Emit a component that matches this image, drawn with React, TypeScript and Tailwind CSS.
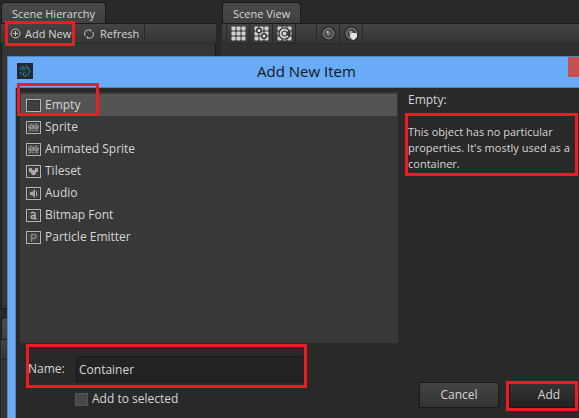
import { useState, type ReactNode } from "react";

const INVADER = [
  "..#.....#..",
  "...#...#...",
  "#.#######.#",
  "###.###.###",
  "###########",
  ".#########.",
  "..#.....#..",
  ".##.#.#.##.",
];

function Frame({ children }: { children?: ReactNode }) {
  return (
    <svg width="15" height="13" viewBox="0 0 15 13" aria-hidden="true" className="shrink-0">
      <rect x="0.5" y="0.5" width="14" height="12" fill="#404040" stroke="#b4b4b4" />
      <rect x="1.5" y="1.5" width="12" height="10" fill="none" stroke="#2e2e2e" strokeOpacity="0.7" />
      {children}
    </svg>
  );
}

function Invader() {
  return (
    <g>
      <rect x="2" y="2" width="11" height="9" fill="#505050" />
      {INVADER.flatMap((row, y) =>
        row.split("").map((c, x) => (c === "#" ? <rect key={x + "-" + y} x={x + 2} y={y + 2} width="1" height="1" fill="#868686" /> : null)),
      )}
    </g>
  );
}

const ITEMS: { name: string; art?: ReactNode }[] = [
  { name: "Empty" },
  { name: "Sprite", art: <Invader /> },
  { name: "Animated Sprite", art: <Invader /> },
  { name: "Tileset", art: <path d="M3 3h3v2h3V3h3v4h-2v2H9v1H6V9H5V7H3z" fill="#a8a8a8" /> },
  { name: "Audio", art: <path d="M4 5h2l3-3v9L6 8H4z M10 4h1v5h-1z" fill="#a4a4a4" /> },
  { name: "Bitmap Font", art: <path d="M5 4.500Q7.500 2 9 4.500V10M9 6.500H7Q5 6.800 5 8T7 9.500Q8.500 9.500 9 8M9 10h1.500" fill="none" stroke="#b0b0b0" strokeWidth="1.500" /> },
  { name: "Particle Emitter", art: <path d="M5.500 11V3.500H8Q10 3.500 10 5.300T8 7.500H5.500" fill="none" stroke="#858585" strokeWidth="1.500" /> },
];

const DOTS = [0, 5, 10];

function GridIcon({ kind }: { kind: "plain" | "snap" | "center" }) {
  return (
    <svg width="15" height="15" viewBox="0 0 15 15" aria-hidden="true">
      {DOTS.flatMap((y) => DOTS.map((x) => <rect key={x + "-" + y} x={x + 0.5} y={y + 0.5} width="4" height="4" rx="0.8" fill="#d0d0d0" />))}
      {kind === "snap" && (
        <g fill="#dcdcdc" stroke="#363636" strokeWidth="1.500">
          <circle cx="5" cy="4.500" r="2.300" />
          <circle cx="10" cy="10" r="2.300" />
        </g>
      )}
      {kind === "center" && (
        <g fill="none">
          <circle cx="7.500" cy="7.500" r="4.200" stroke="#383838" strokeWidth="4" />
          <path d="M10.800 5.300A4 4 0 1 0 10.800 9.700" stroke="#d0d0d0" strokeWidth="1.800" />
        </g>
      )}
    </svg>
  );
}

function LensIcon({ bulb }: { bulb?: boolean }) {
  return (
    <svg width="15" height="15" viewBox="0 0 15 15" aria-hidden="true">
      <circle cx="7.500" cy="7.500" r="7" fill="#1a1a1a" />
      <circle cx="7.500" cy="7.500" r="5.500" fill="#555" stroke="#929292" />
      <circle cx="7.500" cy="7.500" r="3" fill="#707070" stroke="#333" />
      <circle cx="6.500" cy="6" r="1.200" fill="#b5b5b5" />
      {bulb && <path d="M6 9a2 2 0 0 1 2-2h3a2 2 0 0 1 2 2v2l-3 3H9l-3-3z" fill="#e2e2e2" />}
    </svg>
  );
}

function Highlight({ className }: { className: string }) {
  return <span aria-hidden="true" className={"pointer-events-none absolute z-10 border-3 border-[#ed1c24] " + className} />;
}

const BAR = "flex h-[21px] items-stretch border-y border-t-[#1a1a1a] border-b-[#292929] bg-linear-to-b from-[#444] to-[#343434]";
const TAB = "flex h-[22px] -mb-px items-center self-start rounded-t border border-b-0 border-[#191919] bg-linear-to-b from-[#4a4a4a] to-[#404040] px-2.5";
const TOOL = "flex w-[23px] items-center justify-center border-l border-[#292929]";
const BUTTON = "h-[26px] w-20 border border-[#191919] bg-linear-to-b";

export default function App() {
  const [selected, setSelected] = useState("Empty");
  const [name, setName] = useState("Container");

  return (
    <div className="relative flex h-screen min-h-[418px] gap-1.5 overflow-hidden bg-[#282828] pt-0.5 font-['Open_Sans','Noto_Sans',sans-serif] text-[12px] leading-4 text-[#d6d6d6]">
      <div className="flex w-[216px] shrink-0 flex-col gap-2 pl-px text-[11px]">
        <section className="flex h-[307px] shrink-0 flex-col">
          <h2 className={TAB}>Scene Hierarchy</h2>
          <div className={BAR}>
            <button className="relative flex w-[74px] items-center gap-1 pl-[9px]">
              <svg width="11" height="11" viewBox="0 0 11 11" fill="none" stroke="#c4c4c4" aria-hidden="true">
                <circle cx="5.500" cy="5.500" r="4.500" />
                <path d="M5.500 3v5M3 5.500h5" />
              </svg>
              Add New
              <Highlight className="-top-[3px] right-0 -bottom-[3px] left-1" />
            </button>
            <button className="flex w-[70px] items-center gap-1.5 border-r border-[#292929] pl-[9px]">
              <svg width="10" height="10" viewBox="0 0 10 10" fill="none" stroke="#a8a8a8" strokeWidth="1.200" aria-hidden="true">
                <path d="M1.300 7A4 4 0 0 1 6.500 1.300M8.700 3A4 4 0 0 1 3.500 8.700" />
                <path d="M6 0l2 1.500L6 3zM4 7L2 8.500 4 10z" fill="#a8a8a8" stroke="none" />
              </svg>
              Refresh
            </button>
          </div>
          <div className="flex-1 border border-t-0 border-[#191919] bg-[#353535]" />
        </section>
        <section className="flex flex-1 flex-col">
          <div className="h-[22px] w-24 rounded-t border border-b-0 border-[#191919] bg-linear-to-b from-[#4a4a4a] to-[#404040]" />
          <div className={BAR} />
          <div className="flex-1 bg-[#353535]" />
        </section>
      </div>
      <section className="flex flex-1 flex-col text-[11px]">
        <h2 className={TAB}>Scene View</h2>
        <div className={BAR + " pl-1"}>
          <button aria-label="Grid" className={TOOL}><GridIcon kind="plain" /></button>
          <button aria-label="Snap to grid" className={TOOL}><GridIcon kind="snap" /></button>
          <button aria-label="Center on grid" className={TOOL}><GridIcon kind="center" /></button>
          <span className="w-[21px] border-l border-[#292929]" />
          <button aria-label="Preview" className={TOOL}><LensIcon /></button>
          <button aria-label="Lighting" className={TOOL}><LensIcon bulb /></button>
          <span className="border-l border-[#292929]" />
        </div>
        <div className="flex-1 bg-[#303030]" />
      </section>

      <div role="dialog" aria-labelledby="dialog-title" className="absolute top-14 right-0 bottom-0 left-[7px] flex flex-col border-t border-l border-[#5085c0] bg-[#69abf7] pl-[7px]">
        <header className="flex h-[30px] shrink-0 items-start">
          <svg width="16" height="16" viewBox="0 0 16 16" className="mt-1.5 ml-0.5" aria-hidden="true">
            <path d="M0 0h16v16H0z" fill="#252a2d" />
            <path d="M5 3L3 7M7 3L5 8M9 2l2 4M11 4l2 5M8 4v3M3 9l2 3M9 9H7.500Q6 10 6.500 12T9 13v-2M12 9l-1 4" fill="none" stroke="#1c88a5" />
          </svg>
          <h1 id="dialog-title" className="flex-1 pt-1 pl-3 text-center text-[15px] leading-5 text-[#111820]">Add New Item</h1>
          <button aria-label="Close" className="h-5 w-[11px] bg-[#c75050]" />
        </header>
        <div className="flex flex-1 flex-col border-t border-l border-[#5085c0] bg-[#292929]">
          <div className="flex">
            <div className="mt-1 ml-1 min-h-[251px] flex-1 bg-[#383838] p-px pt-0.5">
              {ITEMS.map((item) => (
                <button
                  key={item.name}
                  onClick={() => setSelected(item.name)}
                  className={"relative flex h-[22px] w-full items-center gap-1 pl-[5px] text-left " + (selected === item.name ? "bg-[#545454]" : "")}
                >
                  <Frame>{item.art}</Frame>
                  {item.name}
                  {item.name === "Empty" && <Highlight className="-top-[11px] -left-1 h-[33px] w-[82px]" />}
                </button>
              ))}
            </div>
            <div className="w-[181px] pt-1 pr-0 pl-2.5">
              <h3>{selected}:</h3>
              <p className="relative mt-4 w-[171px] text-[11px] leading-4">
                This object has no particular properties. It's mostly used as a container.
                <Highlight className="-top-[11px] right-px -left-[3px] h-[63px]" />
              </p>
            </div>
          </div>
          <div className="flex items-start justify-between">
            <form className="flex flex-col pt-[13px] pl-3" onSubmit={(e) => e.preventDefault()}>
              <div className="relative flex items-center">
                <label htmlFor="item-name" className="w-12">Name:</label>
                <input id="item-name" value={name} onChange={(e) => setName(e.target.value)} className="h-[26px] w-[227px] border border-[#191919] bg-[#232323] px-0.5 outline-none" />
                <Highlight className="-top-3 -right-1 -bottom-1.5 -left-0.5" />
              </div>
              <label className="mt-[9px] ml-[47px] flex items-center gap-1">
                <input type="checkbox" className="size-[13px] appearance-none border border-[#555] bg-[#484848] checked:bg-[#8a8a8a]" />
                Add to selected
              </label>
            </form>
            <div className="flex gap-2.5 pt-[39px]">
              <button className={BUTTON + " from-[#444] to-[#343434]"}>Cancel</button>
              <button className={BUTTON + " relative -mr-2.5 from-[#353535] to-[#222]"}>
                Add
                <Highlight className="-top-0.5 right-2.5 -bottom-1 -left-1" />
              </button>
            </div>
          </div>
        </div>
      </div>
    </div>
  );
}
